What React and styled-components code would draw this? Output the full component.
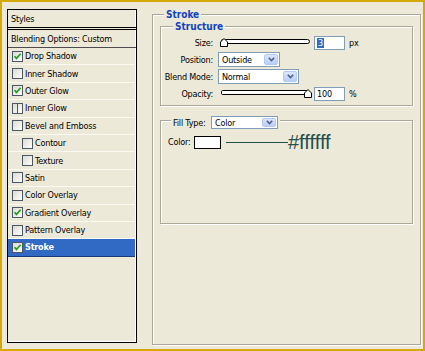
import React from "react";
import styled, { createGlobalStyle } from "styled-components";

const UI_FONT = `"DejaVu Sans Condensed", "DejaVu Sans", Tahoma, sans-serif`;

const GlobalStyle = createGlobalStyle`
  html, body {
    margin: 0;
    padding: 0;
    background: #ece9d8;
  }
  body {
    font-family: ${UI_FONT};
    font-stretch: condensed;
    font-size: 9px;
    letter-spacing: -0.2px;
    color: #000;
  }
`;

const Frame = styled.div`
  box-sizing: border-box;
  width: 425px;
  height: 351px;
  border: 2px solid #d6a90b;
  background: #ece9d8;
  display: flex;
  align-items: flex-start;
  gap: 15px;
  padding: 7px 1px 0 5px;
`;

/* ---------- left styles list ---------- */
const Panel = styled.div`
  flex: none;
  box-sizing: border-box;
  width: 130px;
  height: 334px;
  border: 1px solid #000;
  box-shadow: inset -1px -1px 0 #fff;
  display: flex;
  flex-direction: column;
`;

const PanelHeader = styled.div`
  box-sizing: border-box;
  height: 20px;
  border-bottom: 3px double #000;
  padding-left: 3px;
  display: flex;
  align-items: center;
`;

const BlendRow = styled.div`
  box-sizing: border-box;
  height: 18px;
  border-bottom: 1px solid #4d4d4d;
  padding-left: 3px;
  display: flex;
  align-items: center;
`;

const LayerRow = styled.div`
  box-sizing: border-box;
  height: 17.4px;
  display: flex;
  align-items: center;
  gap: 2px;
  padding-left: ${(p) => (p.$indent ? 14 : 4)}px;
  margin-right: 1px;
  background: ${(p) => (p.$selected ? "#316ac5" : "transparent")};
  color: ${(p) => (p.$selected ? "#fff" : "#000")};
  font-weight: ${(p) => (p.$selected ? "bold" : "normal")};
  border-bottom: 1px solid ${(p) => (p.$selected ? "#1c3a78" : "#fbfaf3")};
`;

const Box = styled.span`
  flex: none;
  position: relative;
  box-sizing: border-box;
  width: 11px;
  height: 11px;
  border: 1px solid #4b5766;
  background: linear-gradient(135deg, #dcdbd2 0%, #f4f3ee 70%, #fff 100%);
  display: flex;
`;

const Check = () => (
  <svg width="9" height="9" viewBox="0 0 9 9">
    <path d="M1.5 4.2 L3.5 6.4 L7.6 1.8" fill="none" stroke="#21a121" strokeWidth="1.7" />
  </svg>
);

const SplitLine = styled.span`
  position: absolute;
  left: 4px;
  top: -1px;
  bottom: -1px;
  width: 1px;
  background: #4b5766;
`;

const Checkbox = ({ checked, split }) => (
  <Box>
    {checked && <Check />}
    {split && <SplitLine />}
  </Box>
);

const layers = [
  { label: "Drop Shadow", checked: true },
  { label: "Inner Shadow" },
  { label: "Outer Glow", checked: true },
  { label: "Inner Glow", split: true },
  { label: "Bevel and Emboss" },
  { label: "Contour", indent: true },
  { label: "Texture", indent: true },
  { label: "Satin" },
  { label: "Color Overlay" },
  { label: "Gradient Overlay", checked: true },
  { label: "Pattern Overlay" },
  { label: "Stroke", checked: true, selected: true },
];

/* ---------- right group boxes ---------- */
const Group = styled.div`
  position: relative;
  flex: none;
  box-sizing: border-box;
  border: 1px solid #aca899;
  box-shadow: inset 1px 1px 0 #fff, 1px 1px 0 #fff;
`;

const StrokeGroup = styled(Group)`
  width: 269px;
  height: 331px;
  margin-top: 5px;
  padding: 11px 7px 0 7px;
  display: flex;
  flex-direction: column;
`;

const StructureGroup = styled(Group)`
  width: 253px;
  height: 80px;
`;

const FillGroup = styled(Group)`
  width: 253px;
  height: 104px;
  margin-top: 14px;
`;

const GroupTitle = styled.div`
  position: absolute;
  top: -7px;
  left: ${(p) => p.$left}px;
  padding: 0 2px;
  line-height: 13px;
  background: #ece9d8;
  color: #1143c0;
  font-weight: bold;
  font-size: 10px;
  letter-spacing: 0;
`;

const FillLegend = styled.div`
  position: absolute;
  top: -5px;
  left: 10px;
  padding: 0 2px;
  background: #ece9d8;
  display: flex;
  align-items: center;
`;

const LegendLabel = styled.span`
  width: 38px;
  white-space: nowrap;
`;

const FormGrid = styled.div`
  display: grid;
  grid-template-columns: 52px auto;
  grid-auto-rows: 17px;
  column-gap: 5px;
  align-items: center;
  padding-top: 7px;
`;

const Label = styled.span`
  text-align: right;
  white-space: nowrap;
`;

const Controls = styled.div`
  display: flex;
  align-items: center;
  gap: 4px;
`;

const SliderWrap = styled.div`
  position: relative;
  width: 89px;
  height: 9px;
  margin-left: 3px;
`;

const Track = styled.div`
  box-sizing: border-box;
  margin-top: 1px;
  height: 5px;
  border: 1px solid #000;
  border-radius: 2px 3px 3px 2px;
  background: #fff;
`;

const Thumb = styled.svg`
  position: absolute;
  top: 0;
`;

const Slider = ({ value }) => (
  <SliderWrap>
    <Track />
    <Thumb
      width="8"
      height="9"
      viewBox="0 0 8 9"
      style={{ left: `${-1 + (value / 100) * 84}px` }}
    >
      <path d="M0.5 8.5 V4 L4 0.5 L7.5 4 V8.5 Z" fill="#fff" stroke="#000" strokeWidth="1" />
    </Thumb>
  </SliderWrap>
);

const NumberBox = styled.div`
  box-sizing: border-box;
  width: 31px;
  height: 14px;
  border: 1px solid #7f9db9;
  background: #fff;
  padding-left: 2px;
  display: flex;
  align-items: center;
  line-height: 10px;
`;

const Highlight = styled.span`
  background: #316ac5;
  color: #fff;
  padding: 0 1px;
`;

const SelectBox = styled.div`
  box-sizing: border-box;
  width: ${(p) => p.$w}px;
  height: ${(p) => p.$h ?? 15}px;
  border: 1px solid #7f9db9;
  background: #fff;
  display: flex;
  align-items: center;
  justify-content: space-between;
  padding-left: 3px;
`;

const DropButton = styled.span`
  box-sizing: border-box;
  width: 14px;
  height: calc(100% - 2px);
  margin-right: 1px;
  border: 1px solid #b4c8f6;
  border-radius: 2px;
  background: linear-gradient(#dbe6fe, #b9cdf8);
  display: flex;
  align-items: center;
  justify-content: center;
`;

const Select = ({ value, w, h }) => (
  <SelectBox $w={w} $h={h}>
    <span>{value}</span>
    <DropButton>
      <svg width="7" height="5" viewBox="0 0 7 5">
        <path d="M0.8 0.8 L3.5 3.6 L6.2 0.8" fill="none" stroke="#4d6185" strokeWidth="1.6" />
      </svg>
    </DropButton>
  </SelectBox>
);

const ColorRow = styled.div`
  display: flex;
  align-items: center;
  padding: 11px 0 0 7px;
`;

const ColorLabel = styled.span`
  width: 26px;
`;

const Swatch = styled.span`
  box-sizing: border-box;
  width: 27px;
  height: 13px;
  border: 1px solid #000;
  background: #fff;
`;

const Connector = styled.span`
  width: 62px;
  height: 1px;
  margin-left: 5px;
  background: #24504c;
`;

const HexText = styled.span`
  font-family: "Liberation Sans", Arial, sans-serif;
  font-stretch: normal;
  letter-spacing: 0;
  font-size: 20px;
  line-height: 20px;
  color: #24504c;
`;

export default function App() {
  return (
    <>
      <GlobalStyle />
      <Frame>
        <Panel>
          <PanelHeader>Styles</PanelHeader>
          <BlendRow>Blending Options: Custom</BlendRow>
          {layers.map((l) => (
            <LayerRow key={l.label} $indent={l.indent} $selected={l.selected}>
              <Checkbox checked={l.checked} split={l.split} />
              <span>{l.label}</span>
            </LayerRow>
          ))}
        </Panel>

        <StrokeGroup>
          <GroupTitle $left={11}>Stroke</GroupTitle>
          <StructureGroup>
            <GroupTitle $left={12}>Structure</GroupTitle>
            <FormGrid>
              <Label>Size:</Label>
              <Controls>
                <Slider value={0} />
                <NumberBox>
                  <Highlight>3</Highlight>
                </NumberBox>
                <span>px</span>
              </Controls>
              <Label>Position:</Label>
              <Controls>
                <Select value="Outside" w={62} />
              </Controls>
              <Label>Blend Mode:</Label>
              <Controls>
                <Select value="Normal" w={81} />
              </Controls>
              <Label>Opacity:</Label>
              <Controls>
                <Slider value={100} />
                <NumberBox>100</NumberBox>
                <span>%</span>
              </Controls>
            </FormGrid>
          </StructureGroup>

          <FillGroup>
            <FillLegend>
              <LegendLabel>Fill Type:</LegendLabel>
              <Select value="Color" w={67} h={13} />
            </FillLegend>
            <ColorRow>
              <ColorLabel>Color:</ColorLabel>
              <Swatch />
              <Connector />
              <HexText>#ffffff</HexText>
            </ColorRow>
          </FillGroup>
        </StrokeGroup>
      </Frame>
    </>
  );
}
